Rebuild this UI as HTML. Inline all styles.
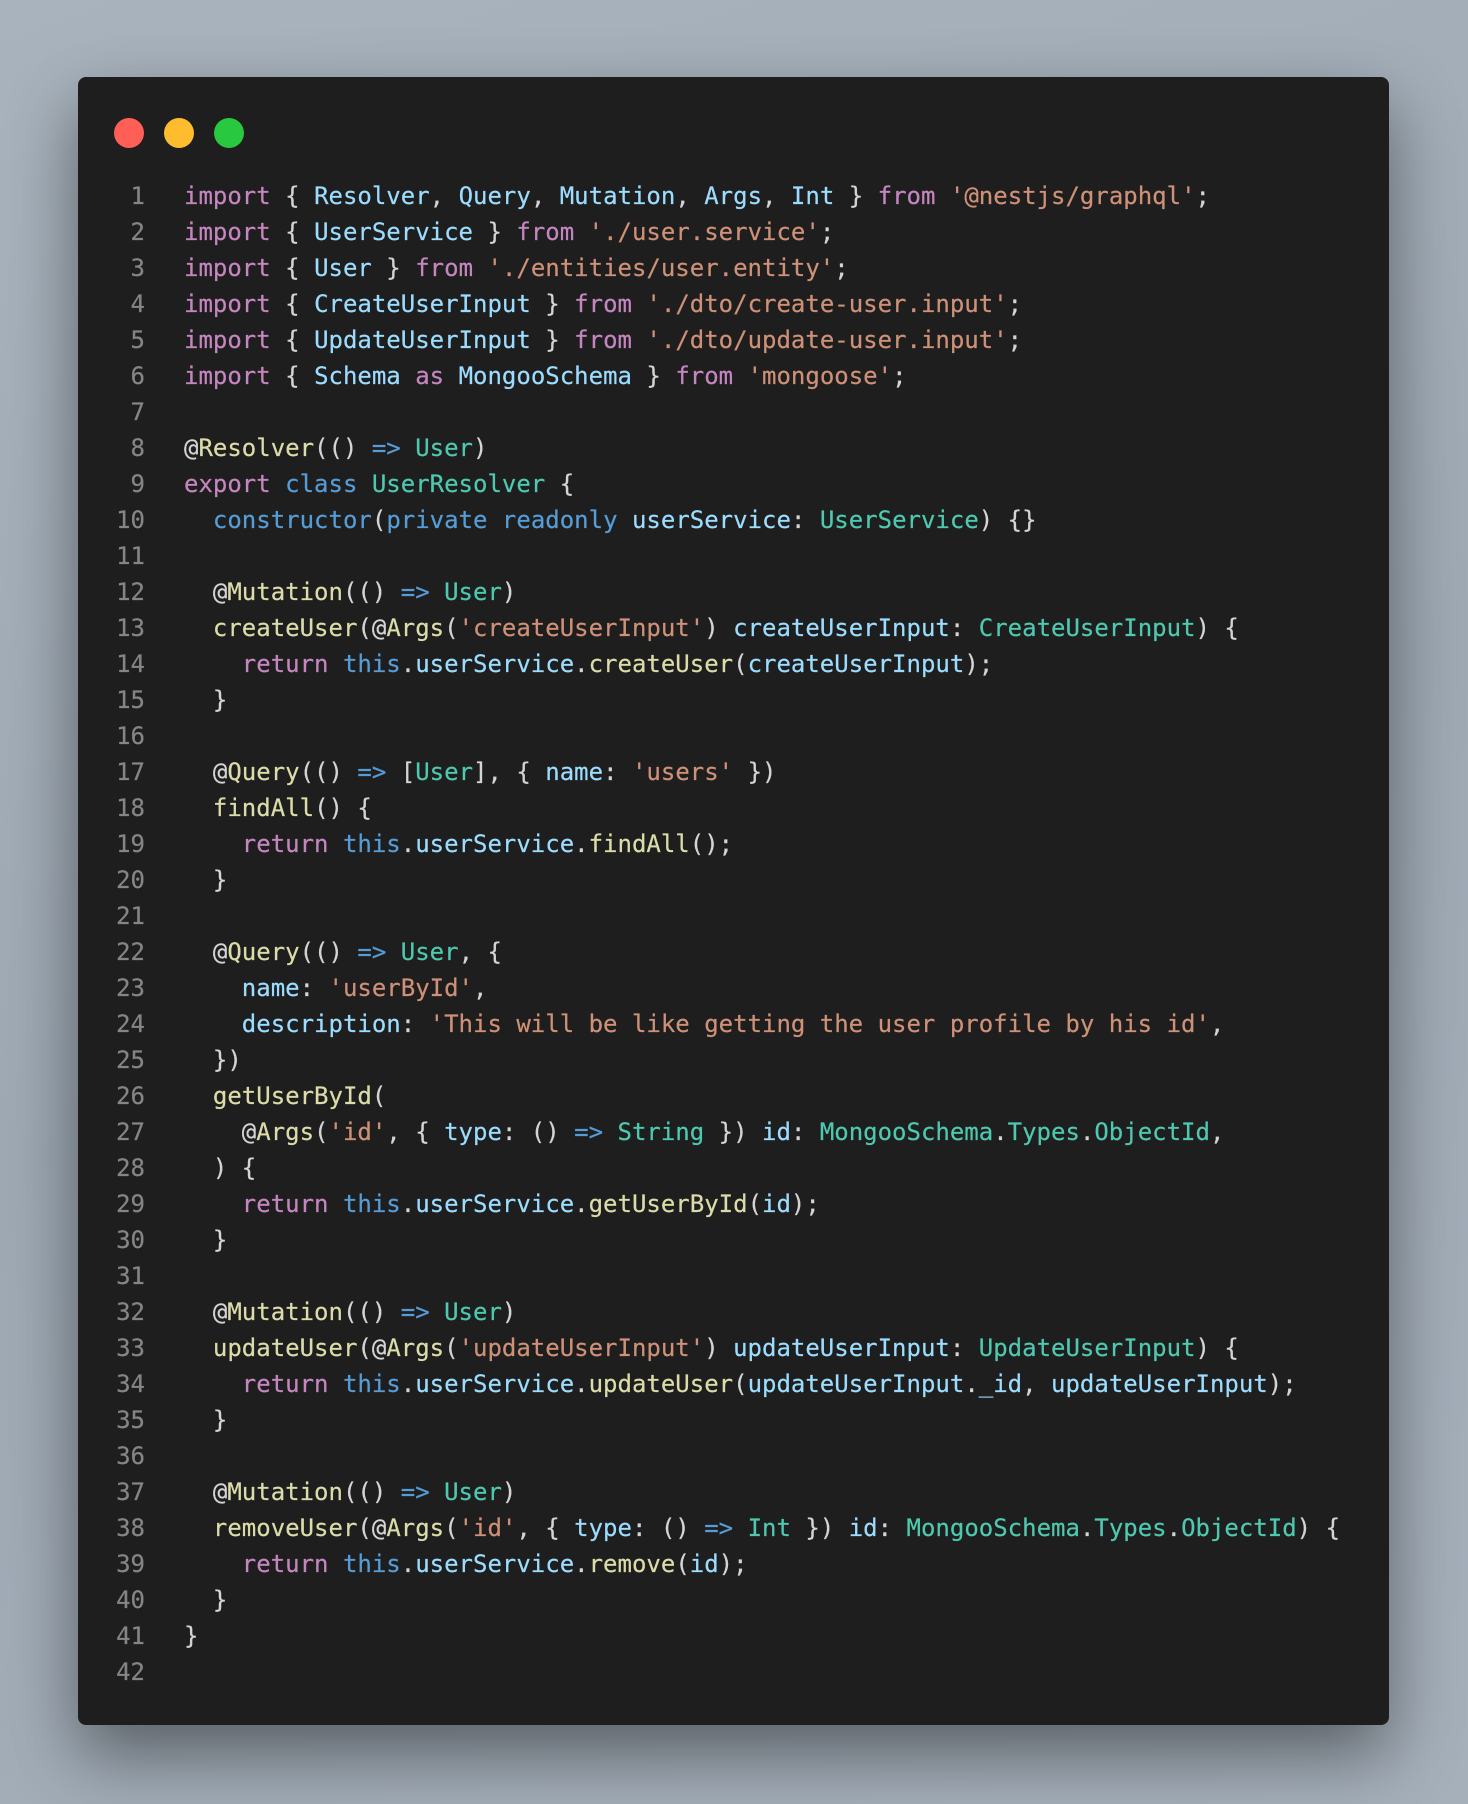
<!DOCTYPE html>
<html><head><meta charset="utf-8"><style>
html,body{margin:0;padding:0;}
body{width:1468px;height:1804px;background:linear-gradient(160deg,#a9b3bd,#9ea9b4 50%,#a6b0bb);position:relative;overflow:hidden;}
.win{position:absolute;left:78px;top:77px;width:1311px;height:1648px;background:#1e1e1e;border-radius:8px;box-shadow:0 30px 70px rgba(0,0,0,0.45);}
.dot{position:absolute;top:41px;width:30px;height:30px;border-radius:50%;}
.code{position:absolute;left:-2px;top:101px;font-family:"DejaVu Sans Mono","Liberation Mono",monospace;font-size:24px;color:#d4d4d4;-webkit-text-stroke:0.2px currentColor;}
.l{height:36px;line-height:36px;white-space:pre;position:relative;}
.n{position:absolute;left:0;width:69px;text-align:right;color:#858585;}
.c{position:absolute;left:108px;}
.k{color:#c586c0}.v{color:#9cdcfe}.s{color:#ce9178}.t{color:#4ec9b0}.f{color:#dcdcaa}.b{color:#569cd6}
</style></head><body>
<div class="win">
<div class="dot" style="left:36px;background:#ff5f57"></div>
<div class="dot" style="left:86px;background:#febc2e"></div>
<div class="dot" style="left:136px;background:#28c840"></div>
<div class="code">
<div class="l"><span class="n">1</span><span class="c"><span class="k">import</span> { <span class="v">Resolver</span>, <span class="v">Query</span>, <span class="v">Mutation</span>, <span class="v">Args</span>, <span class="v">Int</span> } <span class="k">from</span> <span class="s">'@nestjs/graphql'</span>;</span></div>
<div class="l"><span class="n">2</span><span class="c"><span class="k">import</span> { <span class="v">UserService</span> } <span class="k">from</span> <span class="s">'./user.service'</span>;</span></div>
<div class="l"><span class="n">3</span><span class="c"><span class="k">import</span> { <span class="v">User</span> } <span class="k">from</span> <span class="s">'./entities/user.entity'</span>;</span></div>
<div class="l"><span class="n">4</span><span class="c"><span class="k">import</span> { <span class="v">CreateUserInput</span> } <span class="k">from</span> <span class="s">'./dto/create-user.input'</span>;</span></div>
<div class="l"><span class="n">5</span><span class="c"><span class="k">import</span> { <span class="v">UpdateUserInput</span> } <span class="k">from</span> <span class="s">'./dto/update-user.input'</span>;</span></div>
<div class="l"><span class="n">6</span><span class="c"><span class="k">import</span> { <span class="v">Schema</span> <span class="k">as</span> <span class="v">MongooSchema</span> } <span class="k">from</span> <span class="s">'mongoose'</span>;</span></div>
<div class="l"><span class="n">7</span></div>
<div class="l"><span class="n">8</span><span class="c">@<span class="f">Resolver</span>(() <span class="b">=&gt;</span> <span class="t">User</span>)</span></div>
<div class="l"><span class="n">9</span><span class="c"><span class="k">export</span> <span class="b">class</span> <span class="t">UserResolver</span> {</span></div>
<div class="l"><span class="n">10</span><span class="c">  <span class="b">constructor</span>(<span class="b">private</span> <span class="b">readonly</span> <span class="v">userService</span>: <span class="t">UserService</span>) {}</span></div>
<div class="l"><span class="n">11</span></div>
<div class="l"><span class="n">12</span><span class="c">  @<span class="f">Mutation</span>(() <span class="b">=&gt;</span> <span class="t">User</span>)</span></div>
<div class="l"><span class="n">13</span><span class="c">  <span class="f">createUser</span>(@<span class="f">Args</span>(<span class="s">'createUserInput'</span>) <span class="v">createUserInput</span>: <span class="t">CreateUserInput</span>) {</span></div>
<div class="l"><span class="n">14</span><span class="c">    <span class="k">return</span> <span class="b">this</span>.<span class="v">userService</span>.<span class="f">createUser</span>(<span class="v">createUserInput</span>);</span></div>
<div class="l"><span class="n">15</span><span class="c">  }</span></div>
<div class="l"><span class="n">16</span></div>
<div class="l"><span class="n">17</span><span class="c">  @<span class="f">Query</span>(() <span class="b">=&gt;</span> [<span class="t">User</span>], { <span class="v">name</span>: <span class="s">'users'</span> })</span></div>
<div class="l"><span class="n">18</span><span class="c">  <span class="f">findAll</span>() {</span></div>
<div class="l"><span class="n">19</span><span class="c">    <span class="k">return</span> <span class="b">this</span>.<span class="v">userService</span>.<span class="f">findAll</span>();</span></div>
<div class="l"><span class="n">20</span><span class="c">  }</span></div>
<div class="l"><span class="n">21</span></div>
<div class="l"><span class="n">22</span><span class="c">  @<span class="f">Query</span>(() <span class="b">=&gt;</span> <span class="t">User</span>, {</span></div>
<div class="l"><span class="n">23</span><span class="c">    <span class="v">name</span>: <span class="s">'userById'</span>,</span></div>
<div class="l"><span class="n">24</span><span class="c">    <span class="v">description</span>: <span class="s">'This will be like getting the user profile by his id'</span>,</span></div>
<div class="l"><span class="n">25</span><span class="c">  })</span></div>
<div class="l"><span class="n">26</span><span class="c">  <span class="f">getUserById</span>(</span></div>
<div class="l"><span class="n">27</span><span class="c">    @<span class="f">Args</span>(<span class="s">'id'</span>, { <span class="v">type</span>: () <span class="b">=&gt;</span> <span class="t">String</span> }) <span class="v">id</span>: <span class="t">MongooSchema</span>.<span class="t">Types</span>.<span class="t">ObjectId</span>,</span></div>
<div class="l"><span class="n">28</span><span class="c">  ) {</span></div>
<div class="l"><span class="n">29</span><span class="c">    <span class="k">return</span> <span class="b">this</span>.<span class="v">userService</span>.<span class="f">getUserById</span>(<span class="v">id</span>);</span></div>
<div class="l"><span class="n">30</span><span class="c">  }</span></div>
<div class="l"><span class="n">31</span></div>
<div class="l"><span class="n">32</span><span class="c">  @<span class="f">Mutation</span>(() <span class="b">=&gt;</span> <span class="t">User</span>)</span></div>
<div class="l"><span class="n">33</span><span class="c">  <span class="f">updateUser</span>(@<span class="f">Args</span>(<span class="s">'updateUserInput'</span>) <span class="v">updateUserInput</span>: <span class="t">UpdateUserInput</span>) {</span></div>
<div class="l"><span class="n">34</span><span class="c">    <span class="k">return</span> <span class="b">this</span>.<span class="v">userService</span>.<span class="f">updateUser</span>(<span class="v">updateUserInput</span>.<span class="v">_id</span>, <span class="v">updateUserInput</span>);</span></div>
<div class="l"><span class="n">35</span><span class="c">  }</span></div>
<div class="l"><span class="n">36</span></div>
<div class="l"><span class="n">37</span><span class="c">  @<span class="f">Mutation</span>(() <span class="b">=&gt;</span> <span class="t">User</span>)</span></div>
<div class="l"><span class="n">38</span><span class="c">  <span class="f">removeUser</span>(@<span class="f">Args</span>(<span class="s">'id'</span>, { <span class="v">type</span>: () <span class="b">=&gt;</span> <span class="t">Int</span> }) <span class="v">id</span>: <span class="t">MongooSchema</span>.<span class="t">Types</span>.<span class="t">ObjectId</span>) {</span></div>
<div class="l"><span class="n">39</span><span class="c">    <span class="k">return</span> <span class="b">this</span>.<span class="v">userService</span>.<span class="f">remove</span>(<span class="v">id</span>);</span></div>
<div class="l"><span class="n">40</span><span class="c">  }</span></div>
<div class="l"><span class="n">41</span><span class="c">}</span></div>
<div class="l"><span class="n">42</span></div>
</div>
</div>
</body></html>
